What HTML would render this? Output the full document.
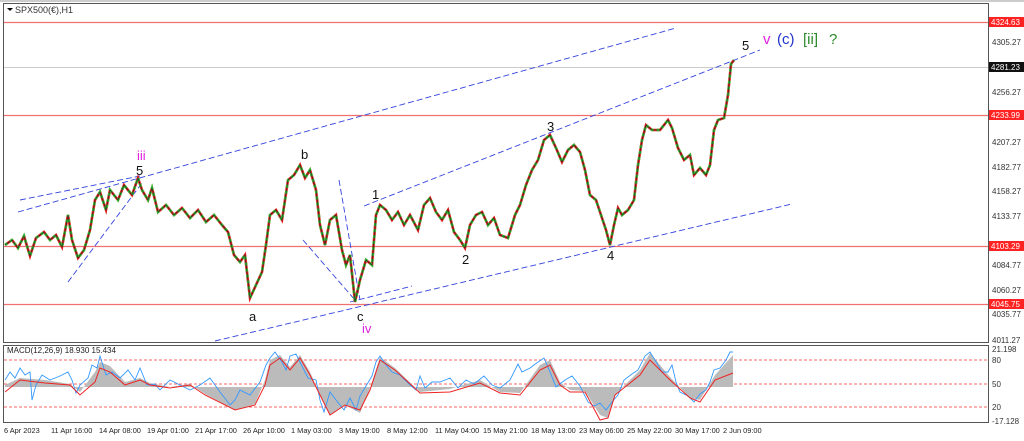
<!DOCTYPE html>
<html><head><meta charset="utf-8"><style>
html,body{margin:0;padding:0;background:#fff;}
svg{display:block;font-family:"Liberation Sans",sans-serif;}
</style></head><body>
<svg width="1024" height="441" viewBox="0 0 1024 441" xmlns="http://www.w3.org/2000/svg">
<defs>
<polyline id="px" points="5,245 12,240 18,248 24,236 30,256 36,238 44,232 50,240 56,235 62,247 68,215 72,240 78,258 84,250 90,230 95,200 100,192 106,210 110,190 118,200 124,185 132,195 138,178 142,190 148,200 152,188 158,212 166,205 174,215 182,208 190,218 198,210 206,222 214,215 222,225 228,232 234,255 240,262 245,255 250,298 256,285 262,272 266,245 270,215 276,210 282,220 288,180 294,175 300,165 305,178 310,170 316,190 320,225 325,245 330,220 336,215 342,250 346,265 350,255 355,302 360,280 366,260 372,265 376,215 380,205 386,210 392,220 398,212 404,225 410,215 418,230 424,205 430,198 436,212 442,220 448,210 454,232 460,240 465,248 470,225 476,215 482,212 488,225 494,218 500,235 508,238 515,215 520,205 526,185 532,170 538,160 544,140 550,135 556,148 562,162 568,150 574,145 580,152 585,170 590,195 596,200 602,218 606,230 610,245 614,225 618,208 622,215 628,210 634,200 638,165 642,140 646,125 652,130 660,130 668,120 672,128 678,148 684,160 690,155 694,175 700,168 706,175 710,165 714,130 718,120 724,118 728,95 731,64 734,60"/>
</defs>
<rect x="0" y="0" width="1024" height="441" fill="#fff"/>
<rect x="0" y="0" width="1024" height="2" fill="#ccc"/>
<rect x="3.5" y="3.5" width="985" height="339" fill="#fff" stroke="#555"/>
<rect x="3.5" y="345.5" width="985" height="77" fill="#fff" stroke="#555"/>
<g stroke="#f07070" stroke-width="1.3">
<line x1="4" y1="22.5" x2="988" y2="22.5"/>
<line x1="4" y1="115.5" x2="988" y2="115.5"/>
<line x1="4" y1="246.5" x2="988" y2="246.5"/>
<line x1="4" y1="304.5" x2="988" y2="304.5"/>
</g>
<line x1="4" y1="67.5" x2="988" y2="67.5" stroke="#ccc"/>
<path d="M7 8 L13 8 L10 11 Z" fill="#000"/>
<text x="15" y="13" font-size="9" fill="#333">SPX500(€),H1</text>
<g stroke="#3344dd" stroke-width="0.9" stroke-dasharray="6,3" fill="none">
<line x1="18" y1="212" x2="676" y2="28"/>
<line x1="215" y1="341" x2="792" y2="204"/>
<line x1="364" y1="206" x2="760" y2="50"/>
<line x1="20" y1="200" x2="140" y2="176"/>
<line x1="68" y1="282" x2="142" y2="183"/>
<line x1="303" y1="240" x2="355" y2="300"/>
<line x1="339" y1="180" x2="360" y2="300"/>
<line x1="350" y1="302" x2="412" y2="286"/>
</g>
<use href="#px" fill="none" stroke="#e02020" stroke-width="2.6"/>
<use href="#px" fill="none" stroke="#30c030" stroke-width="2.6" stroke-dasharray="3,3"/>
<use href="#px" fill="none" stroke="#222" stroke-width="0.6"/>
<g font-size="13" fill="#111">
<text x="136" y="175">5</text>
<text x="301" y="159">b</text>
<text x="249" y="321">a</text>
<text x="357" y="321">c</text>
<text x="372" y="199">1</text>
<text x="462" y="264">2</text>
<text x="547" y="131">3</text>
<text x="607" y="260">4</text>
<text x="742" y="50">5</text>
</g>
<text x="137" y="160" font-size="13" fill="#e020e0">iii</text>
<text x="362" y="333" font-size="13" fill="#e020e0">iv</text>
<text x="763" y="44" font-size="15" fill="#e020e0">v</text>
<text x="777" y="44" font-size="15" fill="#2233cc">(c)</text>
<text x="803" y="44" font-size="15" fill="#2a8a2a">[ii]</text>
<text x="829" y="44" font-size="15" fill="#2a8a2a">?</text>
<g font-size="8" fill="#333">
<text x="992" y="45">4305.27</text>
<text x="992" y="95">4256.27</text>
<text x="992" y="145">4207.27</text>
<text x="992" y="170">4182.77</text>
<text x="992" y="194">4158.27</text>
<text x="992" y="219">4133.77</text>
<text x="992" y="268">4084.77</text>
<text x="992" y="293">4060.27</text>
<text x="992" y="317">4035.77</text>
<text x="992" y="343">4011.27</text>
<text x="992" y="352">21.198</text>
<text x="992" y="363">80</text>
<text x="992" y="387">50</text>
<text x="992" y="410">20</text>
<text x="992" y="424">-17.128</text>
</g>
<g font-size="8" fill="#fff">
<rect x="989" y="17" width="35" height="10" fill="#f22"/><text x="991" y="25">4324.63</text>
<rect x="989" y="62" width="35" height="10" fill="#111"/><text x="991" y="70">4281.23</text>
<rect x="989" y="110" width="35" height="10" fill="#f22"/><text x="991" y="118">4233.99</text>
<rect x="989" y="241" width="35" height="10" fill="#f22"/><text x="991" y="249">4103.29</text>
<rect x="989" y="299" width="35" height="10" fill="#f22"/><text x="991" y="307">4045.75</text>
</g>
<text x="7" y="353" font-size="8" fill="#222">MACD(12,26,9) 18.930 15.434</text>
<g stroke="#f33" stroke-width="0.8" stroke-dasharray="3,2">
<line x1="4" y1="360" x2="988" y2="360"/>
<line x1="4" y1="384" x2="988" y2="384"/>
<line x1="4" y1="407" x2="988" y2="407"/>
</g>
<path fill="#bbb" d="M5,387 L5,385 20,378 45,380 70,384 80,392 95,372 100,362 110,366 125,382 140,378 150,383 170,387 190,384 205,394 235,410 255,404 265,380 270,360 280,355 290,367 300,355 310,372 320,395 330,415 345,405 360,413 370,388 380,357 395,368 420,392 450,389 480,380 500,392 520,393 540,365 550,360 560,382 570,390 585,391 600,415 608,418 615,395 640,370 650,353 670,377 690,398 700,400 715,375 733,355 733,387 Z"/>
<polyline fill="none" stroke="#3399ff" stroke-width="0.9" points="5,380 10,372 15,378 20,368 25,375 30,372 32,400 36,385 42,375 50,380 60,376 68,372 72,380 76,393 80,385 88,378 92,365 97,368 100,356 106,375 112,372 120,378 128,370 135,380 140,368 147,385 155,384 160,390 170,380 180,385 190,390 200,385 210,378 220,392 230,405 235,400 240,390 250,395 260,382 266,365 270,358 275,352 282,362 286,370 290,356 296,354 300,362 308,378 316,380 320,400 324,412 330,392 336,400 344,410 350,398 356,410 360,396 366,386 372,376 376,362 380,356 386,365 392,372 400,375 410,385 416,390 420,376 425,388 432,382 440,382 450,378 458,388 466,380 474,384 484,376 492,385 500,388 510,380 518,364 522,372 530,368 538,362 544,358 550,372 556,387 565,380 572,376 580,386 588,402 594,406 600,403 606,410 612,402 618,395 624,380 632,374 638,370 645,356 650,352 655,360 662,372 668,372 672,365 676,382 680,392 688,396 694,402 700,394 706,390 710,382 714,370 720,368 726,360 730,352 733,352"/>
<polyline fill="none" stroke="#ee2222" stroke-width="1" points="5,392 20,380 45,383 70,385 80,395 95,382 100,368 110,372 125,385 140,380 150,385 170,388 190,385 205,395 235,410 255,405 265,385 270,365 280,358 290,370 300,358 310,375 320,395 330,415 345,405 360,410 370,390 380,360 395,370 420,393 450,392 480,383 500,393 520,395 540,370 550,365 560,385 570,392 585,392 600,420 608,418 615,395 640,375 650,360 670,380 690,398 700,402 715,380 733,373"/>
<g font-size="7.4" fill="#222">
<text x="4" y="433">6 Apr 2023</text>
<text x="51" y="433">11 Apr 16:00</text>
<text x="99" y="433">14 Apr 08:00</text>
<text x="147" y="433">19 Apr 01:00</text>
<text x="195" y="433">21 Apr 17:00</text>
<text x="243" y="433">26 Apr 10:00</text>
<text x="291" y="433">1 May 03:00</text>
<text x="339" y="433">3 May 19:00</text>
<text x="387" y="433">8 May 12:00</text>
<text x="435" y="433">11 May 04:00</text>
<text x="483" y="433">15 May 21:00</text>
<text x="531" y="433">18 May 13:00</text>
<text x="579" y="433">23 May 06:00</text>
<text x="627" y="433">25 May 22:00</text>
<text x="675" y="433">30 May 17:00</text>
<text x="723" y="433">2 Jun 09:00</text>
</g>
</svg>
</body></html>
